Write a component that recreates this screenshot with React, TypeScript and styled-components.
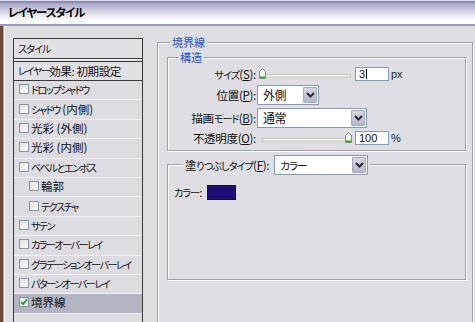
import React from 'react';
import styled, { createGlobalStyle } from 'styled-components';

const BG = '#dfdfe3';

const GlobalStyle = createGlobalStyle`
  html, body {
    margin: 0;
    padding: 0;
    background: ${BG};
  }
  body {
    font-family: 'Noto Sans CJK JP', 'Noto Sans', sans-serif;
    font-size: 11px;
    font-feature-settings: 'palt';
    color: #111;
  }
  * {
    box-sizing: border-box;
  }
`;

// MS UI Gothic kana are much narrower than Noto's, so kana runs get shrunk a bit
const Kana = styled.span`
  font-size: 0.88em;
  letter-spacing: -0.09em;
`;

const KANA_RUN = /([\u3040-\u30ff]+)/;

const Jp = ({ text }: { text: string }) => (
  <>
    {text.split(KANA_RUN).map((part, i) =>
      i % 2 === 1 ? <Kana key={i}>{part}</Kana> : part
    )}
  </>
);

const Window = styled.div`
  width: 475px;
  height: 322px;
  overflow: hidden;
  display: flex;
  flex-direction: column;
  background: ${BG};
`;

const TitleBar = styled.div`
  flex: none;
  height: 26px;
  padding: 0 0 2px 8px;
  display: flex;
  align-items: center;
  font-size: 11.5px;
  font-weight: bold;
  letter-spacing: -1.1px;
  color: #000;
  background: linear-gradient(
    to bottom,
    #d6d6e4 0,
    #d6d6e4 1px,
    #8c8cae 1px,
    #8c8cae 3px,
    #a6a6c6 3px,
    #e6e6f0 15px,
    #ffffff 21px,
    #ffffff 24px,
    #9a9abb 24px
  );
`;

const Main = styled.div`
  flex: 1;
  display: flex;
  min-height: 0;
`;

const DesktopEdge = styled.div`
  flex: none;
  width: 5px;
  background: linear-gradient(
    to right,
    #6e4a3e 0,
    #6e4a3e 3px,
    #a9a9b9 3px,
    #a9a9b9 4px,
    #f4f4f6 4px
  );
`;

const Content = styled.div`
  flex: 1;
  display: flex;
  align-items: flex-start;
  padding: 12px 0 0 8px;
`;

/* ---------- left: style list ---------- */

const StylePanel = styled.div`
  flex: none;
  width: 130px;
  height: 300px;
  border: 1px solid #3a3a3a;
  border-bottom: none;
  background: #dcdce1;
`;

const PanelHeader = styled.div`
  height: 20px;
  padding: 0 4px 1px;
  display: flex;
  align-items: center;
  font-size: 11.5px;
  white-space: pre;
  background: #e2e2e6;
  border-bottom: 1px solid #3a3a3a;
  box-shadow: 0 1px 0 #f6f6f8;
`;

const PresetRow = styled(PanelHeader)`
  margin-top: 2px;
  border-top: 1px solid #3a3a3a;
  box-shadow: none;
  letter-spacing: -0.4px;

  ${Kana} {
    letter-spacing: -0.14em;
  }
`;

const Item = styled.div<{ $indent?: boolean; $selected?: boolean }>`
  height: 19.4px;
  display: flex;
  align-items: center;
  gap: 2px;
  padding: 0 0 2px ${(p) => (p.$indent ? 15 : 5)}px;
  border-bottom: 1px solid #f0f0f3;
  background: ${(p) => (p.$selected ? '#b4b5c3' : 'transparent')};
  white-space: pre;
  font-size: 11.5px;

  ${Kana} {
    letter-spacing: -0.15em;
  }
`;

const Box = styled.span`
  flex: none;
  width: 10px;
  height: 10px;
  border: 1px solid #8096b0;
  background: linear-gradient(135deg, #e2e2de, #fbfbf8);
  display: inline-flex;
  align-items: center;
  justify-content: center;
`;

/* ---------- right: settings ---------- */

const OuterGroup = styled.div`
  flex: none;
  width: 316px;
  height: 300px;
  margin: 4px 0 0 14px;
  border: 1px solid #a0a0a8;
  box-shadow: inset 1px 1px 0 #fff, 1px 1px 0 #fff;
`;

const InnerGroup = styled.div`
  width: 299px;
  margin: 8px 0 0 9px;
  border: 1px solid #a0a0a8;
  box-shadow: inset 1px 1px 0 #fff, 1px 1px 0 #fff;
`;

const FillGroup = styled(InnerGroup)`
  margin-top: 13px;
  height: 116px;
`;

const GroupTitle = styled.div<{ $offset: number }>`
  width: fit-content;
  height: 14px;
  margin: -8px 0 0 ${(p) => p.$offset}px;
  padding: 0 2px;
  line-height: 14px;
  font-size: 11px;
  color: #1e4fd6;
  background: ${BG};
`;

const FormGrid = styled.div`
  display: grid;
  grid-template-columns: 88px auto;
  grid-template-rows: 18px 23px 23px 18px;
  column-gap: 1px;
  align-items: center;
  padding: 1px 0 3px;
`;

const Label = styled.span`
  text-align: right;
  white-space: nowrap;
  font-size: 11.5px;
  letter-spacing: -0.3px;
`;

const Mn = styled.span`
  text-decoration: underline;
  text-underline-offset: 1px;
`;

const Control = styled.div`
  display: flex;
  align-items: center;
`;

const NumberBox = styled.div`
  flex: none;
  width: 34px;
  height: 14px;
  margin-left: 2px;
  padding-left: 3px;
  display: flex;
  align-items: center;
  border: 1px solid #7f9db9;
  background: #fff;
  font-family: 'Liberation Sans', Arial, sans-serif;
  font-size: 11px;
`;

const Caret = styled.span`
  width: 1px;
  height: 10px;
  margin-left: 1px;
  background: #000;
`;

const Unit = styled.span`
  margin-left: 2px;
  font-family: 'Liberation Sans', Arial, sans-serif;
  font-size: 11px;
  color: #222;
`;

const Select = styled.div<{ $w: number }>`
  flex: none;
  width: ${(p) => p.$w}px;
  height: 20px;
  padding: 0 1px 0 5px;
  display: flex;
  align-items: center;
  justify-content: space-between;
  border: 1px solid #7f9db9;
  background: #fff;
  font-size: 12px;
  letter-spacing: -0.4px;
`;

const DropButton = styled.span`
  flex: none;
  width: 14px;
  height: 16px;
  display: flex;
  align-items: center;
  justify-content: center;
  border: 1px solid #a8a8be;
  border-radius: 1px;
  background: linear-gradient(#d6d6e2, #b6b6ca);
`;

const FillLegend = styled.div`
  width: fit-content;
  height: 20px;
  margin: -10px 0 0 15px;
  padding: 0 2px;
  display: flex;
  align-items: center;
  gap: 5px;
  background: ${BG};
`;

const ColorRow = styled.div`
  height: 16px;
  margin-top: 9px;
  padding-left: 6px;
  display: flex;
  align-items: center;
  gap: 4px;
  font-size: 11.5px;
`;

const Swatch = styled.span<{ $color: string }>`
  width: 29px;
  height: 15px;
  border: 1px solid #151030;
  background: ${(p) => p.$color};
`;

const Check = () => (
  <svg width="8" height="8" viewBox="0 0 8 8">
    <path d="M1 4 L3 6.2 L7 1.5" fill="none" stroke="#1f9a1f" strokeWidth="1.8" />
  </svg>
);

const Chevron = () => (
  <svg width="9" height="6" viewBox="0 0 9 6">
    <path d="M1 1 L4.5 4.5 L8 1" fill="none" stroke="#2a2a3a" strokeWidth="2" />
  </svg>
);

type SliderProps = { pos: number };

// track + pentagon thumb, pos = thumb left in px
const Slider = ({ pos }: SliderProps) => (
  <svg width="96" height="14" viewBox="0 0 96 14" style={{ flex: 'none' }}>
    <rect x="5.5" y="7.5" width="88" height="2.5" fill="#f6f6ea" stroke="#c8c8b8" strokeWidth="1" />
    <path
      d={`M${pos + 0.5} 4.5 L${pos + 3.5} 1.5 L${pos + 6.5} 4.5 L${pos + 6.5} 11.5 L${pos + 0.5} 11.5 Z`}
      fill="#f4f6f4"
      stroke="#7d8c80"
      strokeWidth="1"
    />
    <rect x={pos + 1} y="9.5" width="5" height="1.8" fill="#3aa53a" />
  </svg>
);

type Effect = { name: string; indent?: boolean; checked?: boolean };

const effects: Effect[] = [
  { name: 'ドロップシャドウ' },
  { name: 'シャドウ (内側)' },
  { name: '光彩 (外側)' },
  { name: '光彩 (内側)' },
  { name: 'ベベルとエンボス' },
  { name: '輪郭', indent: true },
  { name: 'テクスチャ', indent: true },
  { name: 'サテン' },
  { name: 'カラーオーバーレイ' },
  { name: 'グラデーションオーバーレイ' },
  { name: 'パターンオーバーレイ' },
  { name: '境界線', checked: true },
];

const App = () => {
  return (
    <Window>
      <GlobalStyle />
      <TitleBar>レイヤースタイル</TitleBar>
      <Main>
        <DesktopEdge />
        <Content>
          <StylePanel>
            <PanelHeader>
              <Jp text="スタイル" />
            </PanelHeader>
            <PresetRow>
              <Jp text="レイヤー効果: 初期設定" />
            </PresetRow>
            {effects.map((e) => (
              <Item key={e.name} $indent={e.indent} $selected={e.checked}>
                <Box>{e.checked && <Check />}</Box>
                <span>
                  <Jp text={e.name} />
                </span>
              </Item>
            ))}
            <Item />
          </StylePanel>

          <OuterGroup>
            <GroupTitle $offset={12}>境界線</GroupTitle>
            <InnerGroup>
              <GroupTitle $offset={10}>構造</GroupTitle>
              <FormGrid>
                <Label>
                  <Kana>サイズ</Kana>(<Mn>S</Mn>):
                </Label>
                <Control>
                  <Slider pos={2} />
                  <NumberBox>
                    3<Caret />
                  </NumberBox>
                  <Unit>px</Unit>
                </Control>

                <Label>
                  位置(<Mn>P</Mn>):
                </Label>
                <Control>
                  <Select $w={62}>
                    外側
                    <DropButton>
                      <Chevron />
                    </DropButton>
                  </Select>
                </Control>

                <Label>
                  描画<Kana>モード</Kana>(<Mn>B</Mn>):
                </Label>
                <Control>
                  <Select $w={110}>
                    通常
                    <DropButton>
                      <Chevron />
                    </DropButton>
                  </Select>
                </Control>

                <Label>
                  不透明度(<Mn>O</Mn>):
                </Label>
                <Control>
                  <Slider pos={88} />
                  <NumberBox>100</NumberBox>
                  <Unit>%</Unit>
                </Control>
              </FormGrid>
            </InnerGroup>

            <FillGroup>
              <FillLegend>
                <Label>
                  塗<Kana>りつぶしタイプ</Kana>(<Mn>F</Mn>):
                </Label>
                <Select $w={94}>
                  <Kana>カラー</Kana>
                  <DropButton>
                    <Chevron />
                  </DropButton>
                </Select>
              </FillLegend>
              <ColorRow>
                <span>
                  <Kana>カラー</Kana>:
                </span>
                <Swatch $color="#1e0d74" />
              </ColorRow>
            </FillGroup>
          </OuterGroup>
        </Content>
      </Main>
    </Window>
  );
};

export default App;
